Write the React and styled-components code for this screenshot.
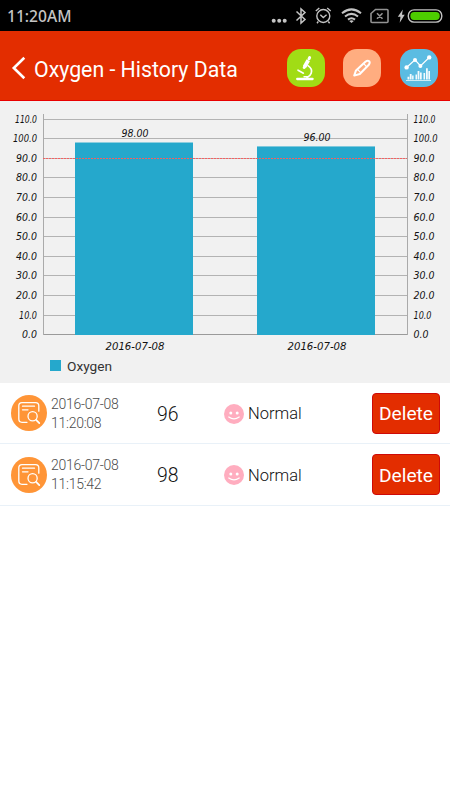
import React from "react";
import styled, { createGlobalStyle } from "styled-components";

const GlobalStyle = createGlobalStyle`
  * { box-sizing: border-box; }
  body { margin: 0; background: #fff; font-family: Roboto, "Noto Sans", sans-serif; }
`;

const Screen = styled.div`
  width: 450px;
  height: 800px;
  background: #fff;
  overflow: hidden;
`;

const StatusBar = styled.div`
  display: flex;
  align-items: center;
  justify-content: space-between;
  height: 31px;
  padding: 1px 6px 0 7px;
  background: #000;
`;

const Clock = styled.span`
  font: 500 15.6px/30px "Noto Sans", sans-serif;
  color: #c4c4c4;
`;

const StatusIcons = styled.svg`
  display: block;
  width: 180px;
  height: 30px;
`;

const Header = styled.header`
  display: flex;
  align-items: center;
  height: 70px;
  padding: 5px 12px 0 11px;
  background: #e32d00;
  border-bottom: 1px solid #e90000;
`;

const BackIcon = styled.svg`
  width: 15px;
  height: 24px;
  margin-right: 8px;
`;

const Title = styled.h1`
  flex: 1;
  margin: 3px 0 0;
  font-size: 21.3px;
  font-weight: 400;
  line-height: 28px;
  white-space: nowrap;
  color: #fff;
`;

const Actions = styled.div`
  display: flex;
  gap: 18px;

  & > :last-child { margin-left: 1px; }
`;

const Action = styled.button`
  width: 38px;
  height: 38px;
  padding: 0;
  border: 0;
  border-radius: 14px;
  background: ${(p) => p.$color};
  svg { display: block; }
`;

const ChartPanel = styled.section`
  height: 282px;
  background: #f1f1f1;
`;

const ChartSvg = styled.svg`
  display: block;
  width: 450px;
  height: 251px;
`;

const ChartText = styled.text`
  font: italic 10.6px "DejaVu Sans", sans-serif;
  fill: #111;
`;

const Legend = styled.div`
  display: flex;
  align-items: center;
  gap: 6px;
  height: 28px;
  padding-left: 50px;
  font-size: 13.7px;
  color: #333;
`;

const Swatch = styled.span`
  width: 11px;
  height: 11px;
  margin-top: -1px;
  background: #25a8cc;
`;

const Row = styled.div`
  display: flex;
  align-items: center;
  height: ${(p) => p.$height}px;
  padding: 0 10px 0 11px;
  border-bottom: 1px solid #e9f1f8;
`;

const RecordIcon = styled.svg`
  flex: none;
  width: 36px;
  height: 36px;
  margin-right: 4px;
`;

const Timestamp = styled.div`
  width: 106px;
  padding-top: 1px;
  font-size: 14px;
  font-weight: 300;
  line-height: 18.6px;
  letter-spacing: -0.27px;
  color: #4c4c4c;
`;

const Value = styled.div`
  width: 67px;
  padding-top: 2px;
  font-size: 19.4px;
  font-weight: 300;
  color: #111;
`;

const Status = styled.div`
  display: flex;
  flex: 1;
  align-items: center;
  gap: 4px;
  padding-top: 1px;
  font-size: 16.5px;
  font-weight: 300;
  color: #111;
`;

const DeleteButton = styled.button`
  width: 68px;
  height: 41px;
  padding: 2px 0 0;
  border: 1px solid #ce0a08;
  border-radius: 4px;
  background: #e32d00;
  font: 400 19.2px/36px Roboto, sans-serif;
  color: #fff;
`;

const TOP = 17.6;
const STEP = 19.6;
const BASE = 234;
const ticks = [110, 100, 90, 80, 70, 60, 50, 40, 30, 20, 10, 0];
const bars = [
  { x: 75, value: 98, date: "2016-07-08" },
  { x: 257, value: 96, date: "2016-07-08" },
];
const yOf = (v) => TOP + ((110 - v) / 10) * STEP;
const labelWidth = { 110: 22, 100: 24, 10: 18, 0: 15 };

function Chart() {
  return (
    <ChartSvg viewBox="0 0 450 251">
      {ticks.map((t) => {
        const y = Math.round(yOf(t)) + 0.5;
        const label = t.toFixed(1);
        const width = labelWidth[t] ?? 21;
        return (
          <g key={t}>
            <path d={`M43 ${y}H407`} stroke={t === 0 ? "#9a9a9a" : "#b3b3b3"} />
            <ChartText x="37" y={y + 3.5} textAnchor="end" textLength={width} lengthAdjust="spacingAndGlyphs">{label}</ChartText>
            <ChartText x="413.5" y={y + 3.5} textLength={width} lengthAdjust="spacingAndGlyphs">{label}</ChartText>
          </g>
        );
      })}
      <path d="M43.5 13V234M407.5 13V234" stroke="#aaa" />
      {bars.map((b) => {
        const y = yOf(b.value) + 0.4;
        return (
          <g key={b.x}>
            <rect x={b.x} y={y} width="118" height={BASE - y} fill="#25a8cc" />
            <ChartText x={b.x + 60} y={y - 5.6} textAnchor="middle" textLength="27" lengthAdjust="spacingAndGlyphs">{b.value.toFixed(2)}</ChartText>
            <ChartText x={b.x + 60} y="249" textAnchor="middle" textLength="59" lengthAdjust="spacingAndGlyphs">{b.date}</ChartText>
          </g>
        );
      })}
      <path d="M43 57.5H407" stroke="#f56060" strokeDasharray="2 1" />
    </ChartSvg>
  );
}

const records = [
  { date: "2016-07-08", time: "11:20:08", value: 96, height: 61 },
  { date: "2016-07-08", time: "11:15:42", value: 98, height: 62 },
];

export default function App() {
  return (
    <Screen>
      <GlobalStyle />
      <StatusBar>
        <Clock>11:20AM</Clock>
        <StatusIcons viewBox="0 0 180 30" fill="none" stroke="#c4c4c4">
          <g fill="#c4c4c4" stroke="none">
            <circle cx="9.7" cy="19.7" r="2" /><circle cx="15.2" cy="19.7" r="2" /><circle cx="20.7" cy="19.7" r="2" />
          </g>
          <path d="M32.5 10.5l8.5 8-4 3.5V8l4 3.5-8.5 8" strokeWidth="1.5" />
          <circle cx="59.3" cy="15" r="6.5" strokeWidth="1.4" />
          <path d="M56.3 13.7l3 2.8 3.3-2.8M51.8 10l3.5-3M63.2 7l3.5 3M54.3 20.5l-1.3 1.7M64.3 20.5l1.3 1.7" strokeWidth="1.4" />
          <g strokeWidth="2"><path d="M78 12.3Q87.5 4.4 97 12.3M81 15.6Q87.5 10.2 94 15.6M84 18.6Q87.5 15.8 91 18.6" /></g>
          <path d="M85.2 20Q87.5 18.5 89.8 20L87.5 22z" fill="#c4c4c4" stroke="none" />
          <path d="M111.5 8.5H123q1 0 1 1v11q0 1-1 1h-15q-1 0-1-1V12.5zM113 12.2l5.5 5.6M118.5 12.2l-5.5 5.6" stroke="#929292" strokeWidth="1.6" />
          <path d="M138.8 8.5l-5 7.2h2.7l-.8 6 5-8H138z" fill="#c4c4c4" stroke="none" />
          <rect x="144.3" y="8.9" width="33.5" height="12.2" rx="5.8" strokeWidth="1.4" />
          <rect x="146.4" y="11" width="29.3" height="8" rx="3.7" fill="#4dcc00" stroke="none" />
        </StatusIcons>
      </StatusBar>
      <Header>
        <BackIcon viewBox="0 0 15 24" fill="none" stroke="#fff" strokeWidth="2.6"><path d="M13.3 1.7L2.8 12l10.5 10.3" /></BackIcon>
        <Title>Oxygen - History Data</Title>
        <Actions>
          <Action $color="#a1dc15" aria-label="Measure">
            <svg width="38" height="38" viewBox="0 0 38 38" fill="none" stroke="#fff" strokeLinecap="round">
              <path d="M22.6 8.6l-.6 1.2" strokeWidth="3" />
              <path d="M21.3 11.2L17.6 17.8" strokeWidth="3.8" strokeLinecap="butt" />
              <path d="M17.8 17.4l-.6 1" strokeWidth="3" />
              <path d="M11 21.2l5.4 3" strokeWidth="1.6" />
              <path d="M21 16.6q4.8 3.2 3.2 7.6-1 2.8-4.2 4.4" strokeWidth="1.7" />
              <path d="M10.2 30H25.6" strokeWidth="2.3" /><path d="M17 27.8h4" strokeWidth="1.4" />
            </svg>
          </Action>
          <Action $color="#ffad80" aria-label="Edit">
            <svg width="38" height="38" viewBox="0 0 38 38" fill="none" stroke="#fff" strokeLinejoin="round" strokeLinecap="round">
              <path d="M11.2 26.6l1.8-5.2L22.4 12.8q2.2-1.8 3.8-.6 1.2 1.6-.4 3.6L16.8 25z" strokeWidth="2" />
              <path d="M14.4 20.4l3 3M21.2 15.2l2 2.2" strokeWidth="1.2" />
            </svg>
          </Action>
          <Action $color="#5bbce2" aria-label="Statistics">
            <svg width="38" height="38" viewBox="0 0 38 38" fill="#fff">
              <path d="M6.5 18.5l8.5-7.6 5.5 6 8.7-8.4" fill="none" stroke="#fff" strokeWidth="1.2" />
              <circle cx="6.6" cy="18.4" r="2.2" /><circle cx="15" cy="10.9" r="2" /><circle cx="20.4" cy="17" r="2" /><circle cx="29.2" cy="8.4" r="2.2" />
              <g opacity=".93">
                <path d="M7.5 27.7h1.8v2.8H7.5zM9.8 25h1.8v5.5H9.8zM12.1 26.5h1.5v4h-1.5zM15.5 25.5h1.5v5h-1.5zM17.6 22h1.8v8.5h-1.8zM20 23.5h1.7v7H20zM23.5 24h1.6v6.5h-1.6zM26 19.3h1.8v11.2H26zM28.4 22h1.6v8.5h-1.6zM6 31h25v.8H6z" />
              </g>
            </svg>
          </Action>
        </Actions>
      </Header>
      <ChartPanel>
        <Chart />
        <Legend><Swatch />Oxygen</Legend>
      </ChartPanel>
      {records.map((r) => (
        <Row key={r.time} $height={r.height}>
          <RecordIcon viewBox="0 0 36 36" fill="none" stroke="#fff" strokeWidth="1.3" strokeLinecap="round">
            <circle cx="18" cy="18" r="18" fill="#ff9537" stroke="none" />
            <path d="M16 27.3h-5q-3.2 0-3.2-3.2V10.8q0-3.2 3.2-3.2h13.6q3.2 0 3.2 3.2v5.4M11.5 11.2H23.5M11.5 14.8H17" />
            <circle cx="21.6" cy="21.2" r="4.6" /><path d="M25.1 24.8l3.2 3.3" strokeWidth="1.7" />
          </RecordIcon>
          <Timestamp>{r.date}<br />{r.time}</Timestamp>
          <Value>{r.value}</Value>
          <Status>
            <svg width="20" height="20" viewBox="0 0 20 20">
              <circle cx="10" cy="10" r="10" fill="#ffadbf" />
              <g fill="#fff"><circle cx="6.8" cy="9" r="1.5" /><circle cx="13.2" cy="9" r="1.5" /></g>
              <path d="M4.8 13q5.2 3.6 10.4 0" fill="none" stroke="#fff" strokeWidth="1.2" strokeLinecap="round" />
            </svg>
            Normal
          </Status>
          <DeleteButton>Delete</DeleteButton>
        </Row>
      ))}
    </Screen>
  );
}
